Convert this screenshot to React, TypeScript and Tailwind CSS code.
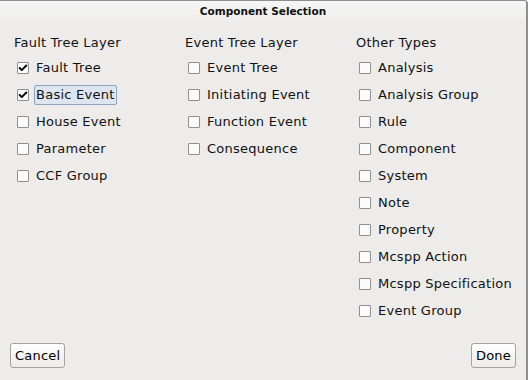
import { Check } from 'lucide-react';

const columns: { title: string; items: { label: string; checked?: boolean; focused?: boolean }[] }[] = [
  {
    title: 'Fault Tree Layer',
    items: [
      { label: 'Fault Tree', checked: true },
      { label: 'Basic Event', checked: true, focused: true },
      { label: 'House Event' },
      { label: 'Parameter' },
      { label: 'CCF Group' },
    ],
  },
  {
    title: 'Event Tree Layer',
    items: [
      { label: 'Event Tree' },
      { label: 'Initiating Event' },
      { label: 'Function Event' },
      { label: 'Consequence' },
    ],
  },
  {
    title: 'Other Types',
    items: [
      { label: 'Analysis' },
      { label: 'Analysis Group' },
      { label: 'Rule' },
      { label: 'Component' },
      { label: 'System' },
      { label: 'Note' },
      { label: 'Property' },
      { label: 'Mcspp Action' },
      { label: 'Mcspp Specification' },
      { label: 'Event Group' },
    ],
  },
];

function CheckRow({ label, checked, focused }: { label: string; checked?: boolean; focused?: boolean }) {
  return (
    <div className="flex h-[27px] items-center pl-[3px]">
      <span className="flex h-[12px] w-[12px] items-center justify-center rounded-[1px] border border-[#8f8f8f] bg-[#fbfbfb]">
        {checked && <Check className="h-[10px] w-[10px] text-black" strokeWidth={4.5} />}
      </span>
      <span
        className={
          focused
            ? 'ml-[5px] rounded-[2px] border border-[#8ea6c6] bg-[#dde5f0] px-px leading-[18px]'
            : 'ml-[7px] leading-[18px]'
        }
      >
        {label}
      </span>
    </div>
  );
}

function Button({ children }: { children: string }) {
  return (
    <button className="h-[25px] rounded-[3px] border border-[#a3a3a3] bg-gradient-to-b from-[#ffffff] to-[#ecebea] px-[4px] text-[13px] tracking-[0.2px] text-black">
      {children}
    </button>
  );
}

export default function App() {
  return (
    <div
      className="flex h-[380px] w-[528px] flex-col overflow-hidden rounded-tr-[4px] border-t border-r-2 border-[#8e8e8e] bg-[#edeceb] text-[13px] tracking-[0.25px] text-[#111]"
      style={{ fontFamily: '"DejaVu Sans", sans-serif' }}
    >
      <div className="flex h-[21px] shrink-0 items-center justify-center bg-gradient-to-b from-[#f6f6f6] to-[#eeedec] text-[10.5px] font-bold tracking-normal">
        Component Selection
      </div>
      <div className="grid grid-cols-[171px_171px_171px] pl-[14px] pt-[10px]">
        {columns.map((col) => (
          <div key={col.title} className="flex flex-col">
            <div className="flex h-[22px] items-center">{col.title}</div>
            {col.items.map((it) => (
              <CheckRow key={it.label} {...it} />
            ))}
          </div>
        ))}
      </div>
      <div className="mt-auto flex justify-between pb-[12px] pl-[10px] pr-[10px]">
        <Button>Cancel</Button>
        <Button>Done</Button>
      </div>
    </div>
  );
}
